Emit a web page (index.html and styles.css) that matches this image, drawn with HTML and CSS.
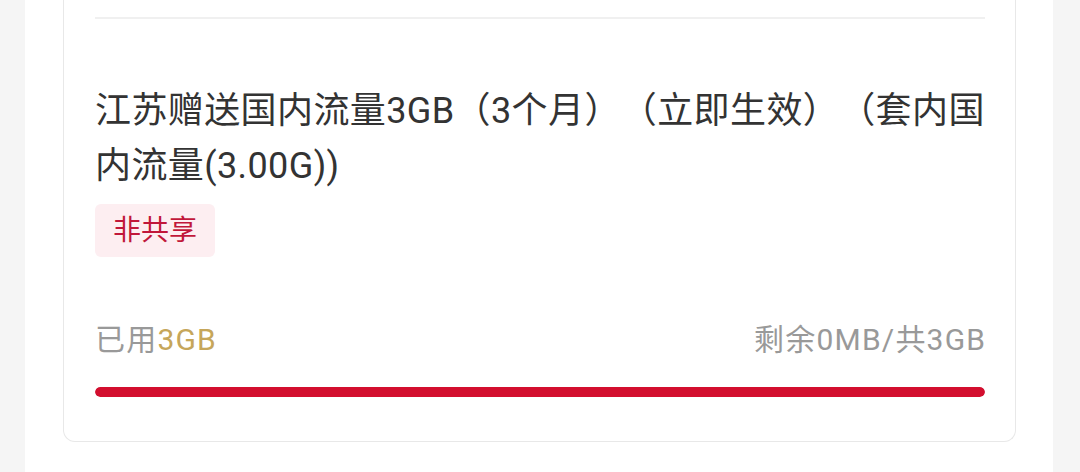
FILE: index.html
```html
<!DOCTYPE html>
<html lang="zh-CN">
<head>
<meta charset="utf-8">
<link rel="stylesheet" href="styles.css">
</head>
<body>
<div class="panel">
  <div class="card">
    <div class="divider"></div>
    <div class="title">江苏赠送国内流量3GB（3个月）（立即生效）（套内国内流量(3.00G))</div>
    <div class="tags"><span class="tag">非共享</span></div>
    <div class="usage">
      <div class="used">已用<span class="amount">3GB</span></div>
      <div class="remain">剩余0MB/共3GB</div>
    </div>
    <div class="bar"><div class="fill" style="width:100%"></div></div>
  </div>
</div>
</body>
</html>
```

FILE: styles.css
```css
html, body {
  margin: 0;
  padding: 0;
  height: 100%;
  background: #f5f5f5;
  font-family: "Roboto", "Noto Sans CJK SC", sans-serif;
}
.panel {
  margin: 0 27px 0 25px;
  background: #ffffff;
  height: 472px;
  padding: 0 37px 0 38px;
  overflow: hidden;
}
.card {
  border: 1px solid #e8e8e8;
  border-top: none;
  border-radius: 0 0 12px 12px;
  padding: 17px 30px 44px 31px;
}
.divider {
  height: 2px;
  background: #f0f0f0;
}
.title {
  margin-top: 65px;
  margin-right: -3px;
  font-size: 36px;
  line-height: 55px;
  color: #333333;
  letter-spacing: 0.4px;
  text-spacing-trim: space-all;
}
.tags {
  margin-top: 10px;
  display: flex;
}
.tag {
  background: #fdeef1;
  color: #c1173a;
  font-size: 28px;
  line-height: 53px;
  padding: 0 18px;
  border-radius: 6px;
}
.usage {
  margin-top: 63px;
  display: flex;
  justify-content: space-between;
  font-size: 30px;
  line-height: 40px;
  color: #999999;
  letter-spacing: 1.2px;
}
.remain {
  margin-right: -1.2px;
}
.amount {
  color: #c6a65a;
}
.bar {
  margin-top: 27px;
  height: 10px;
  border-radius: 5px;
  background: #f0f0f0;
  overflow: hidden;
}
.fill {
  height: 100%;
  background: #d30f2f;
  border-radius: 5px;
}
```
